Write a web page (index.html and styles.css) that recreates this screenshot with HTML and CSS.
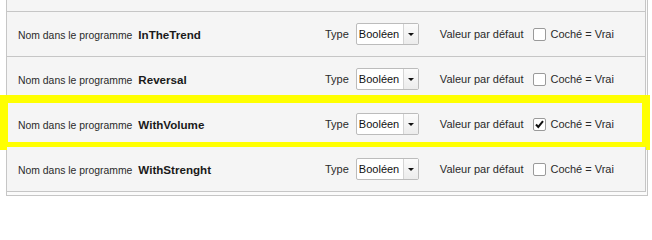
FILE: index.html
```html
<!DOCTYPE html>
<html lang="fr">
<head>
<meta charset="utf-8">
<title>Paramètres</title>
<link rel="stylesheet" href="styles.css">
</head>
<body>
<div class="panel">
  <div class="list">
    <div class="row row-clipped"></div>

    <div class="row">
      <div class="name-group"><span class="label">Nom dans le programme</span><span class="var">InTheTrend</span></div>
      <span class="field-label">Type</span>
      <div class="select"><span class="select-value">Booléen</span><span class="select-btn"><span class="caret"></span></span></div>
      <span class="field-label default-label">Valeur par défaut</span>
      <span class="checkbox"></span>
      <span class="check-text">Coché = Vrai</span>
    </div>

    <div class="row">
      <div class="name-group"><span class="label">Nom dans le programme</span><span class="var">Reversal</span></div>
      <span class="field-label">Type</span>
      <div class="select"><span class="select-value">Booléen</span><span class="select-btn"><span class="caret"></span></span></div>
      <span class="field-label default-label">Valeur par défaut</span>
      <span class="checkbox"></span>
      <span class="check-text">Coché = Vrai</span>
    </div>

    <div class="row highlighted">
      <div class="name-group"><span class="label">Nom dans le programme</span><span class="var">WithVolume</span></div>
      <span class="field-label">Type</span>
      <div class="select"><span class="select-value">Booléen</span><span class="select-btn"><span class="caret"></span></span></div>
      <span class="field-label default-label">Valeur par défaut</span>
      <span class="checkbox checked"><svg viewBox="0 0 13 13" width="13" height="13"><path d="M3 6.5 L5.3 9 L10 3.2" fill="none" stroke="#111" stroke-width="2"/></svg></span>
      <span class="check-text">Coché = Vrai</span>
      <div class="highlight"></div>
    </div>

    <div class="row">
      <div class="name-group"><span class="label">Nom dans le programme</span><span class="var">WithStrenght</span></div>
      <span class="field-label">Type</span>
      <div class="select"><span class="select-value">Booléen</span><span class="select-btn"><span class="caret"></span></span></div>
      <span class="field-label default-label">Valeur par défaut</span>
      <span class="checkbox"></span>
      <span class="check-text">Coché = Vrai</span>
    </div>
  </div>
</div>
</body>
</html>
```

FILE: styles.css
```css
* { box-sizing: border-box; }

html, body {
  margin: 0;
  padding: 0;
  background: #ffffff;
  font-family: "Liberation Sans", Arial, sans-serif;
  font-size: 11px;
  color: #222;
}

.panel {
  width: 642px;
  margin-left: 6px;
  border: 1px solid #c6c6c6;
  border-top: none;
  padding: 0 1px 3px 0;
  background: #fbfbfb;
}

.list {
  display: flex;
  flex-direction: column;
}

.row {
  position: relative;
  display: flex;
  align-items: center;
  height: 45px;
  padding-left: 11px;
  background: #f5f5f5;
  border-right: 1px solid #c6c6c6;
  border-bottom: 1px solid #c6c6c6;
}

.row-clipped {
  height: 12px;
  padding: 0;
}

.name-group {
  flex: 0 0 307px;
  display: flex;
  align-items: baseline;
}

.label {
  font-size: 10.4px;
  color: #2a2a2a;
}

.var {
  margin-left: 6px;
  font-weight: bold;
  font-size: 11.6px;
  color: #1a1a1a;
}

.field-label {
  color: #2a2a2a;
}

.select {
  display: flex;
  width: 63px;
  height: 22px;
  margin-left: 7px;
  border: 1px solid #bcbcbc;
  border-radius: 2px;
  background: #fff;
}

.select-value {
  flex: 1;
  padding-left: 2px;
  line-height: 20px;
  color: #111;
}

.select-btn {
  width: 15px;
  border-left: 1px solid #d4d4d4;
  background: linear-gradient(#fbfbfb, #ececec);
  display: flex;
  align-items: center;
  justify-content: center;
}

.caret {
  width: 0;
  height: 0;
  border-left: 3px solid transparent;
  border-right: 3px solid transparent;
  border-top: 3px solid #111;
}

.default-label {
  margin-left: 21px;
}

.checkbox {
  width: 13px;
  height: 13px;
  margin-left: 10px;
  border: 1px solid #9a9a9a;
  border-radius: 2px;
  background: #fff;
  display: flex;
}

.checkbox svg {
  margin: -1px;
}

.check-text {
  margin-left: 4px;
  color: #2a2a2a;
}

.highlight {
  position: absolute;
  left: -7px;
  right: -5px;
  top: -7px;
  bottom: -4px;
  border: 8px solid #ffff00;
  pointer-events: none;
}
```
